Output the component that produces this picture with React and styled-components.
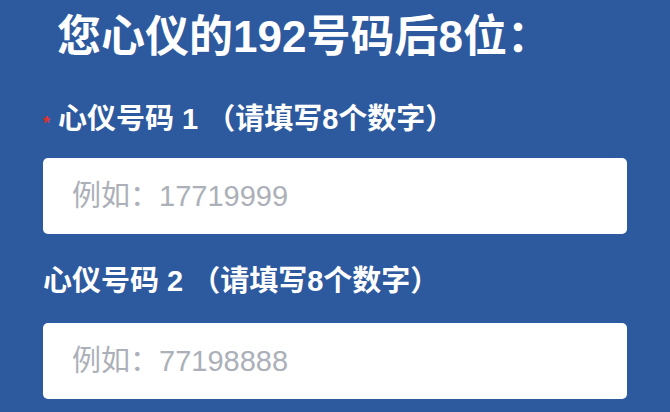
import React from "react";
import styled, { createGlobalStyle } from "styled-components";

const GlobalStyle = createGlobalStyle`
  html, body {
    margin: 0;
    padding: 0;
    background: #2d5a9e;
  }
  body {
    font-family: "Liberation Sans", "Noto Sans CJK SC", sans-serif;
  }
`;

const Page = styled.div`
  width: 670px;
  height: 412px;
  box-sizing: border-box;
  padding: 11px 43px 0 43px;
  background: #2d5a9e;
  overflow: hidden;
`;

const Title = styled.h1`
  margin: 0 0 0 14px;
  font-size: 44px;
  line-height: 52px;
  font-weight: 700;
  color: #ffffff;
`;

const Field = styled.div`
  display: flex;
  flex-direction: column;
  gap: ${(props) => props.gap || "22px"};
  margin-top: ${(props) => props.top || "0px"};
`;

const Label = styled.label`
  display: flex;
  align-items: center;
  font-size: 29px;
  line-height: 36px;
  font-weight: 700;
  color: #ffffff;
  white-space: pre;
`;

const Star = styled.span`
  color: #e0312d;
  font-size: 18px;
  line-height: 18px;
  width: 15px;
  margin-top: 8px;
`;

const Input = styled.input`
  box-sizing: border-box;
  width: 584px;
  height: 76px;
  border: none;
  border-radius: 5px;
  background: #ffffff;
  padding: 0 0 0 29px;
  font-family: "Liberation Sans", "Noto Sans CJK SC", sans-serif;
  font-size: 29px;
  color: #333;
  outline: none;

  &::placeholder {
    color: #acb0b8;
  }
`;

const App = () => {
  return (
    <>
      <GlobalStyle />
      <Page>
        <Title>您心仪的192号码后8位：</Title>
        <Field top="38px" gap="21px">
          <Label>
            <Star>*</Star>心仪号码 1 （请填写8个数字）
          </Label>
          <Input placeholder="例如：17719999" />
        </Field>
        <Field top="29px" gap="24px">
          <Label>心仪号码 2 （请填写8个数字）</Label>
          <Input placeholder="例如：77198888" />
        </Field>
      </Page>
    </>
  );
};

export default App;
